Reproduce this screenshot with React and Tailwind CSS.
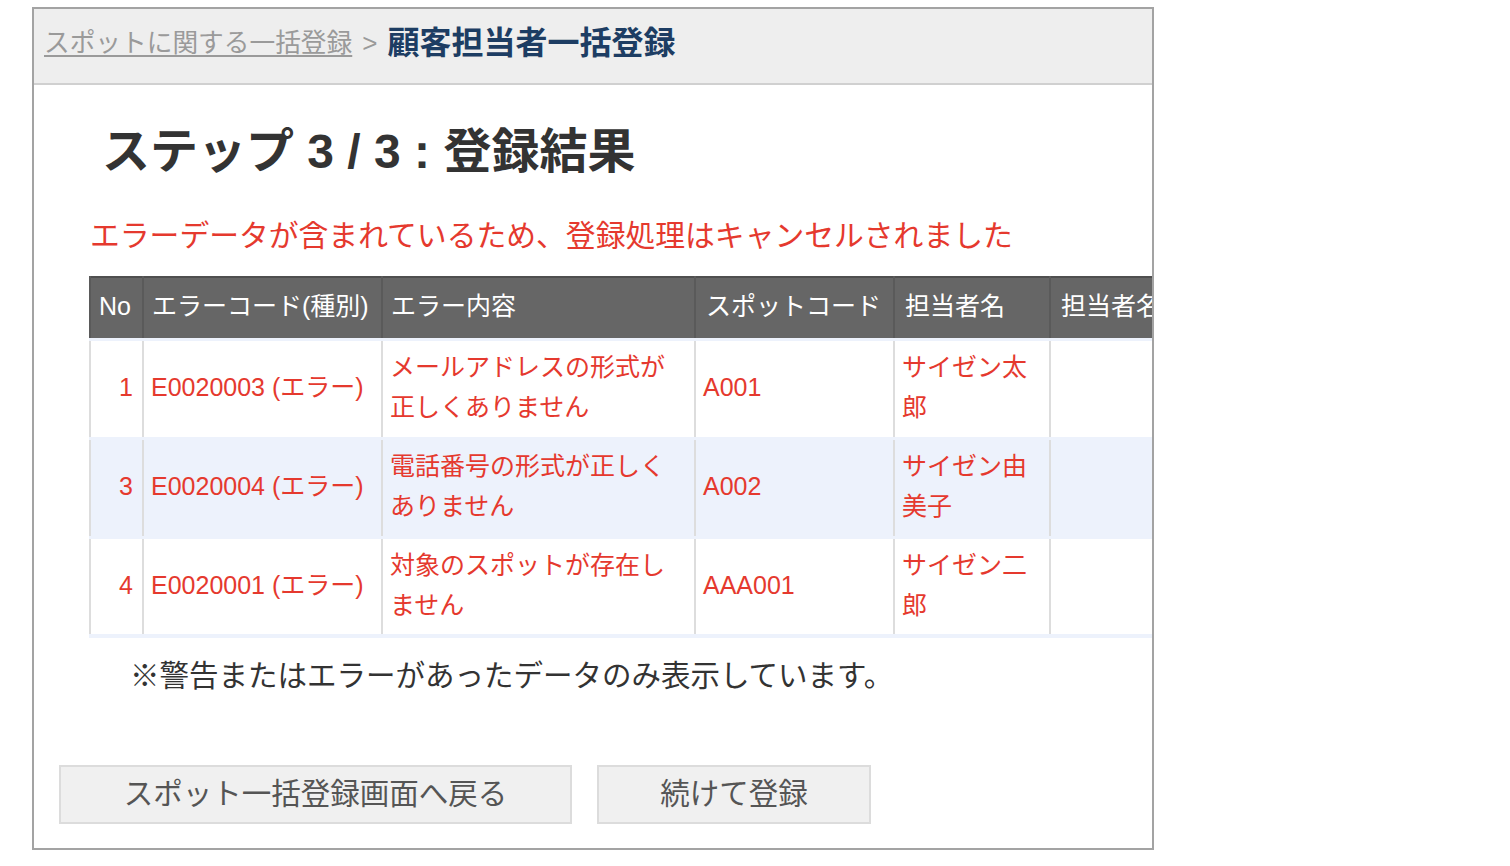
const rows = [
  { no: 1, code: "E0020003 (エラー)", msg: "メールアドレスの形式が正しくありません", spot: "A001", name: "サイゼン太郎" },
  { no: 3, code: "E0020004 (エラー)", msg: "電話番号の形式が正しくありません", spot: "A002", name: "サイゼン由美子" },
  { no: 4, code: "E0020001 (エラー)", msg: "対象のスポットが存在しません", spot: "AAA001", name: "サイゼン二郎" },
];

const font = { fontFamily: '"Liberation Sans", "Noto Sans CJK JP", sans-serif' };

const App = () => {
  return (
    <div className="w-[1510px] h-[866px] bg-white pt-[7px] pl-[32px]" style={font}>
      <div className="w-[1122px] h-[843px] border-2 border-[#a3a3a3] overflow-hidden flex flex-col">
        <div className="h-[76px] bg-[#eeeeee] border-b-2 border-[#d0d0d0] flex items-center pl-[10px] pb-[6px]">
          <a className="text-[25.7px] text-[#9a9a9a] underline underline-offset-[3px]">スポットに関する一括登録</a>
          <span className="text-[26px] text-[#9a9a9a] mx-[10px]">&gt;</span>
          <span className="text-[32px] font-bold text-[#1d3d63]">顧客担当者一括登録</span>
        </div>

        <h1 className="mt-[39px] ml-[68px] text-[48px] leading-[56px] font-bold text-[#333333]">
          ステップ 3 / 3 : 登録結果
        </h1>

        <p className="mt-[36px] ml-[56px] text-[29.8px] leading-[40px] text-[#e5392e]">
          エラーデータが含まれているため、登録処理はキャンセルされました
        </p>

        <div className="mt-[20px] ml-[55px] overflow-hidden">
          <table className="table-fixed border-collapse w-[1120px] text-[25px]">
            <colgroup>
              <col className="w-[53px]" />
              <col className="w-[239px]" />
              <col className="w-[313px]" />
              <col className="w-[199px]" />
              <col className="w-[156px]" />
              <col className="w-[160px]" />
            </colgroup>
            <thead>
              <tr className="bg-[#666666] text-white h-[62px] border-t-2 border-[#4f4f4f]">
                <th className="font-normal text-left px-[8px] pb-[3px] border-x-2 border-[#5a5a5a] whitespace-nowrap">No</th>
                <th className="font-normal text-left px-[8px] pb-[3px] border-x-2 border-[#5a5a5a] whitespace-nowrap">エラーコード(種別)</th>
                <th className="font-normal text-left px-[8px] pb-[3px] border-x-2 border-[#5a5a5a] whitespace-nowrap">エラー内容</th>
                <th className="font-normal text-left px-[10px] pb-[3px] border-x-2 border-[#5a5a5a] whitespace-nowrap">スポットコード</th>
                <th className="font-normal text-left px-[10px] pb-[3px] border-x-2 border-[#5a5a5a] whitespace-nowrap">担当者名</th>
                <th className="font-normal text-left px-[10px] pb-[3px] border-x-2 border-[#5a5a5a] whitespace-nowrap">担当者名(カナ)</th>
              </tr>
            </thead>
            <tbody className="text-[#e5392e] leading-[40px]">
              {rows.map((r, i) => (
                <tr
                  key={r.no}
                  className={`h-[99px] border-t-[3px] border-[#edf2fc] ${i % 2 === 1 ? "bg-[#edf2fc]" : "bg-white"} ${i === rows.length - 1 ? "border-b-[4px]" : ""}`}
                >
                  <td className="text-right px-[9px] pb-[3px] border-x-2 border-[#dddddd]">{r.no}</td>
                  <td className="px-[7px] pb-[3px] border-x-2 border-[#dddddd] whitespace-nowrap">{r.code}</td>
                  <td className="px-[7px] pb-[3px] border-x-2 border-[#dddddd]">{r.msg}</td>
                  <td className="px-[7px] pb-[3px] border-x-2 border-[#dddddd]">{r.spot}</td>
                  <td className="px-[7px] pb-[3px] border-x-2 border-[#dddddd]">{r.name}</td>
                  <td className="px-[7px] border-x-2 border-[#dddddd]"></td>
                </tr>
              ))}
            </tbody>
          </table>
        </div>

        <p className="mt-[18px] ml-[96px] text-[29.5px] leading-[40px] text-[#333333]">
          ※警告またはエラーがあったデータのみ表示しています。
        </p>

        <div className="mt-[69px] ml-[25px] flex gap-[25px]">
          <button className="w-[513px] h-[59px] bg-[#f0f0f0] border-2 border-[#dcdcdc] text-[29.5px] text-[#555555]">
            スポット一括登録画面へ戻る
          </button>
          <button className="w-[274px] h-[59px] bg-[#f0f0f0] border-2 border-[#dcdcdc] text-[29.5px] text-[#555555]">
            続けて登録
          </button>
        </div>
      </div>
    </div>
  );
};

export default App;
